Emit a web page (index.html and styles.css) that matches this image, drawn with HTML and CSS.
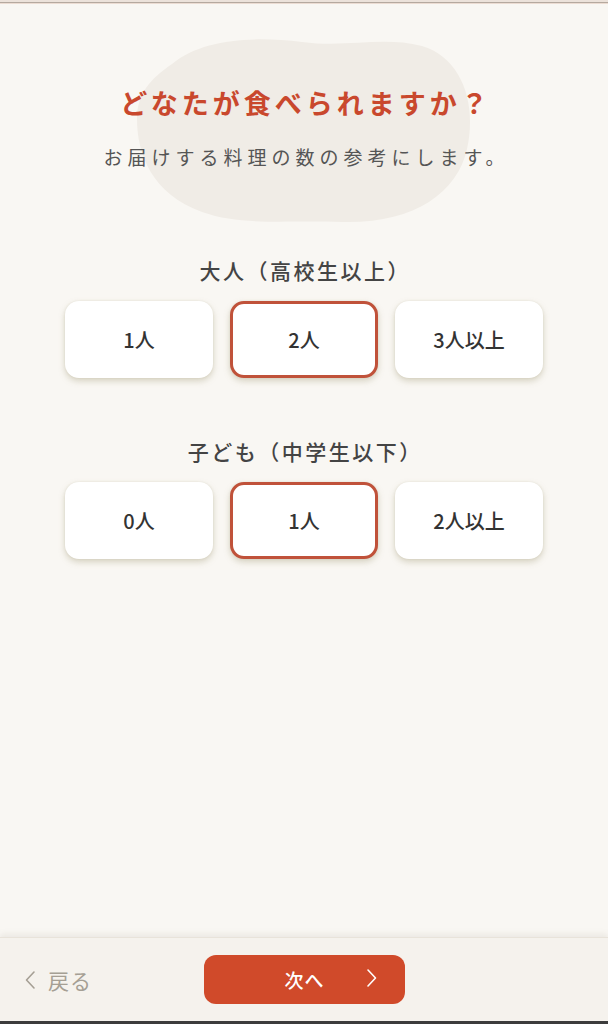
FILE: index.html
```html
<!DOCTYPE html>
<html lang="ja">
<head>
<meta charset="utf-8">
<title>人数選択</title>
<link rel="stylesheet" href="styles.css">
</head>
<body>
<div class="page">
  <div class="topbar"></div>
  <main class="main">
    <header class="hero">
      <svg class="blob" viewBox="0 0 340 190" width="340" height="190" aria-hidden="true">
        <path d="M40 30 C70 5 120 2 170 8 C215 14 250 2 290 12 C330 24 345 70 335 115 C325 160 280 190 210 188 C150 186 110 192 70 178 C20 160 5 120 5 85 C5 60 18 45 40 30 Z" fill="#f0ece6"/>
      </svg>
      <h1 class="title">どなたが食べられますか？</h1>
      <p class="subtitle">お届けする料理の数の参考にします。</p>
    </header>

    <section class="group group-first">
      <h2 class="label">大人（高校生以上）</h2>
      <div class="options">
        <button class="opt">1人</button>
        <button class="opt selected">2人</button>
        <button class="opt">3人以上</button>
      </div>
    </section>

    <section class="group group-second">
      <h2 class="label">子ども（中学生以下）</h2>
      <div class="options">
        <button class="opt">0人</button>
        <button class="opt selected">1人</button>
        <button class="opt">2人以上</button>
      </div>
    </section>
  </main>

  <footer class="footer">
    <a class="back">
      <svg class="back-chev" viewBox="0 0 12 20" width="12" height="20" aria-hidden="true">
        <path d="M10 2 L2.5 10 L10 18" fill="none" stroke="#a59f94" stroke-width="1.6" stroke-linecap="round" stroke-linejoin="round"/>
      </svg>
      <span>戻る</span>
    </a>
    <button class="next">
      <span>次へ</span>
      <svg class="next-chev" viewBox="0 0 12 20" width="12" height="20" aria-hidden="true">
        <path d="M2 2 L9.5 10 L2 18" fill="none" stroke="#ffffff" stroke-width="1.6" stroke-linecap="round" stroke-linejoin="round"/>
      </svg>
    </button>
    <div class="spacer"></div>
  </footer>
</div>
</body>
</html>
```

FILE: styles.css
```css
* { box-sizing: border-box; }
html, body { margin: 0; padding: 0; }
body {
  background: #f9f7f3;
  font-family: "Noto Sans CJK JP", "Noto Sans", sans-serif;
  color: #333;
}
.page {
  width: 608px;
  height: 1024px;
  display: flex;
  flex-direction: column;
  background: #f9f7f3;
}
.topbar {
  height: 4px;
  flex: none;
  background: linear-gradient(#ece2da 0 2px, #b5a99f 2px 3px, #ecdcd2 3px 4px);
}
.main {
  flex: 1;
  display: flex;
  flex-direction: column;
  align-items: center;
}
.hero {
  position: relative;
  width: 100%;
  display: flex;
  flex-direction: column;
  align-items: center;
  padding-top: 81px;
}
.blob {
  position: absolute;
  left: 132px;
  top: 30px;
  z-index: 0;
}
.title {
  position: relative;
  z-index: 1;
  margin: 0;
  font-size: 27px;
  line-height: 36px;
  font-weight: 700;
  letter-spacing: 4px;
  color: #c9482d;
  padding-left: 4px;
}
.subtitle {
  position: relative;
  z-index: 1;
  margin: 23px 0 0;
  font-size: 19px;
  line-height: 26px;
  font-weight: 400;
  letter-spacing: 5px;
  color: #555;
  padding-left: 5px;
}
.group {
  display: flex;
  flex-direction: column;
  align-items: center;
}
.group-first { margin-top: 86px; }
.group-second { margin-top: 59px; }
.label {
  margin: 0;
  font-size: 21px;
  line-height: 28px;
  font-weight: 500;
  letter-spacing: 2.5px;
  color: #444;
  padding-left: 2.5px;
}
.options {
  margin-top: 17px;
  display: flex;
  gap: 17px;
}
.opt {
  width: 148px;
  height: 77px;
  border: 0;
  border-radius: 14px;
  background: #fff;
  box-shadow: 0 3px 6px rgba(150, 140, 100, 0.35), 0 0 2px rgba(150, 140, 100, 0.15);
  font-family: inherit;
  font-size: 20px;
  font-weight: 500;
  color: #333;
  display: flex;
  align-items: center;
  justify-content: center;
  padding: 0;
}
.opt.selected {
  border: 3px solid #c0523a;
}
.footer {
  flex: none;
  height: 87px;
  background: #f5f2ed;
  border-top: 1px solid #e8e3da;
  box-shadow: 0 -3px 6px rgba(120, 110, 90, 0.10);
  border-bottom: 3px solid #3c3c3c;
  display: flex;
  align-items: center;
  padding: 0 0 0 24px;
}
.back {
  width: 180px;
  display: flex;
  align-items: center;
  gap: 12px;
  color: #a59f94;
  font-size: 21px;
  letter-spacing: 1px;
}
.next {
  position: relative;
  width: 201px;
  height: 49px;
  border: 0;
  border-radius: 12px;
  background: #d04a2a;
  color: #fff;
  font-family: inherit;
  font-size: 19px;
  font-weight: 500;
  display: flex;
  align-items: center;
  justify-content: center;
  padding: 0;
  letter-spacing: 1px;
}
.next-chev {
  position: absolute;
  right: 27px;
  top: 13px;
}
.spacer { flex: 1; }
```
